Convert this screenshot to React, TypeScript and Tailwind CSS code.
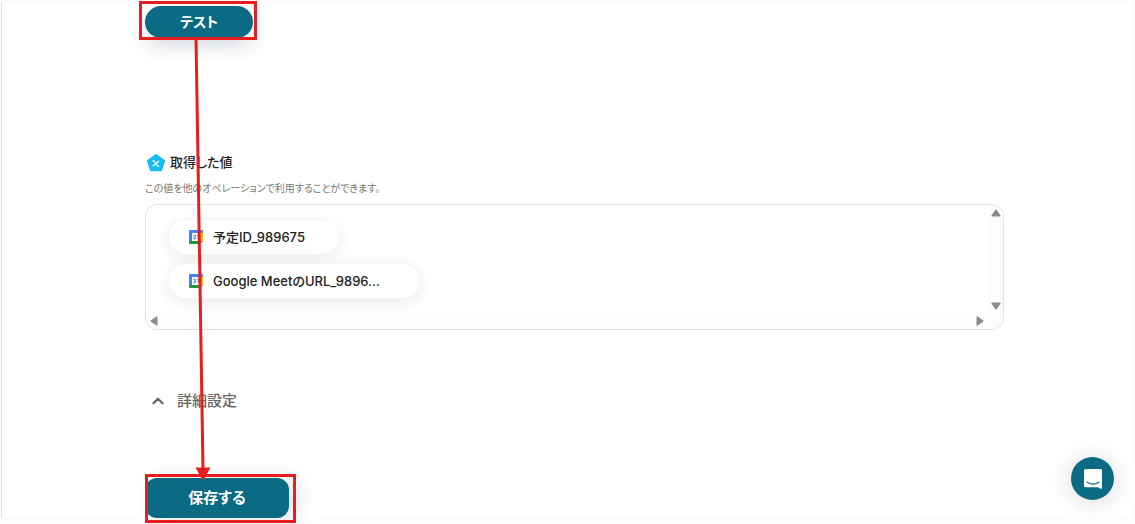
import React from 'react';
import { ChevronUp } from 'lucide-react';

const values = ['予定ID_989675', 'Google MeetのURL_9896...'];

const CalendarIcon: React.FC = () => (
  <svg viewBox="0 0 14 14" className="h-3.5 w-3.5 shrink-0" aria-hidden="true">
    <path d="M1 0h12a1 1 0 0 1 1 1v2H3v8H0V1a1 1 0 0 1 1-1z" fill="#4285f4" />
    <path d="M11 3h3v8h-3z" fill="#fbbc04" />
    <path d="M0 11h11v3H1a1 1 0 0 1-1-1z" fill="#1e9444" />
    <path d="M11 11h3l-3 3z" fill="#ea4335" />
    <path d="M3 3h8v8H3z" fill="#fff" />
    <path
      d="M4 5.2h2.3v3.6H4M4.6 7h1.7M7.8 5.4h1.4v3.8"
      fill="none"
      stroke="#4285f4"
      strokeWidth="0.9"
    />
  </svg>
);

const VariableIcon: React.FC = () => (
  <svg viewBox="0 0 20 20" className="h-5 w-5 shrink-0" aria-hidden="true">
    <path
      d="M11 3.2 18.8 8.900 16 18H6L3.200 8.900z"
      fill="#16bdef"
      stroke="#16bdef"
      strokeWidth="2.4"
      strokeLinejoin="round"
    />
    <path
      d="M7.600 8.900h1.300l3.700 5.200h1.600M14 8.900l-6.200 5.200"
      fill="none"
      stroke="#fff"
      strokeWidth="1.3"
    />
  </svg>
);

const ChatIcon: React.FC = () => (
  <svg viewBox="0 0 20 22" className="h-[22px] w-5" aria-hidden="true">
    <path d="M2.500 1h15a1.500 1.500 0 0 1 1.500 1.500V21l-4.500-1.800h-12A1.500 1.500 0 0 1 1 17.700V2.500A1.500 1.500 0 0 1 2.500 1z" fill="#fff" />
    <path
      d="M4.2 14.2c3.5 2.4 8.1 2.4 11.600 0"
      fill="none"
      stroke="#0b6a84"
      strokeWidth="1.2"
      strokeLinecap="round"
    />
  </svg>
);

const Arrow: React.FC<{ className?: string }> = ({ className = '' }) => (
  <svg viewBox="0 0 10 8" className={`h-2 w-2.5 ${className}`} aria-hidden="true">
    <path
      d="M5 1.2 9 6.8H1z"
      fill="#8b8b8b"
      stroke="#8b8b8b"
      strokeWidth="1.4"
      strokeLinejoin="round"
    />
  </svg>
);

const ValueList: React.FC = () => (
  <div className="mt-2 overflow-hidden rounded-xl border border-[#e2e2e2] bg-white">
    <div className="flex">
      <ul className="flex flex-1 flex-col items-start gap-2 py-3.5 pl-[22px]">
        {values.map((value) => (
          <li
            key={value}
            className="flex h-9 items-center gap-2.5 rounded-full border border-[#f4f4f4] bg-white pr-[34px] pl-5 shadow-[0_4px_16px_rgba(0,0,0,0.08)] last:pr-10"
          >
            <CalendarIcon />
            <span className="text-[13px] leading-5 font-medium text-[#222]">{value}</span>
          </li>
        ))}
      </ul>
      <div className="flex w-[15px] flex-col items-center justify-between bg-[#fcfcfc] pt-1 pb-[3px]">
        <Arrow />
        <Arrow className="rotate-180" />
      </div>
    </div>
    <div className="flex h-4 items-center justify-between bg-[#fcfcfc] pr-[18px] pl-[3px]">
      <Arrow className="-rotate-90" />
      <Arrow className="rotate-90" />
    </div>
  </div>
);

// Guide drawn over the form: highlights both buttons and the order to press them in
const Guide: React.FC = () => (
  <svg
    className="pointer-events-none absolute top-0 left-0 h-[524px] w-[320px]"
    viewBox="0 0 320 524"
    fill="none"
    stroke="#e81e1e"
    strokeWidth="3"
    aria-hidden="true"
  >
    <path d="M140.5 2.5h115v36h-115z" />
    <path d="M146.5 475.5h148v46h-148z" />
    <path d="M196 37 203 470" />
    <path d="M195.5 467.5h15L203 481z" fill="#e81e1e" stroke="none" />
  </svg>
);

const App: React.FC = () => {
  return (
    <div
      lang="ja"
      className="relative min-h-screen overflow-hidden bg-[#fcfcfc] pt-0.5 pr-[3px] pb-1.5 pl-px font-['Inter','Noto_Sans_CJK_JP',sans-serif] [font-feature-settings:'palt']"
    >
      <main className="border-l border-[#e2e2e2] bg-white pt-1 pr-32 pl-[143px]">
        <button
          type="button"
          className="block h-8 w-[108px] rounded-full bg-[#0b6a84] text-sm font-bold text-white shadow-[0_8px_20px_rgba(30,50,80,0.18)]"
        >
          テスト
        </button>

        <section className="pt-[114px]">
          <div className="flex items-center gap-[5px]">
            <VariableIcon />
            <h2 className="text-[13px] leading-5 font-medium text-[#222]">取得した値</h2>
          </div>
          <p className="mt-2 text-[10px] leading-4 text-[#777]">
            この値を他のオペレーションで利用することができます。
          </p>
          <ValueList />
        </section>

        <button
          type="button"
          className="mt-[59px] flex h-6 items-center gap-2.5 pl-1 text-[15px] font-medium text-[#666]"
        >
          <ChevronUp size={18} strokeWidth={3} />
          詳細設定
        </button>

        <button
          type="button"
          className="mt-[65px] block h-10 w-36 rounded-xl bg-[#0b6a84] text-[15px] font-bold text-white shadow-[8px_0_20px_rgba(30,50,80,0.14)]"
        >
          保存する
        </button>
      </main>

      <button
        type="button"
        aria-label="チャット"
        className="absolute right-[21px] bottom-6 flex h-[43px] w-[43px] items-center justify-center rounded-full bg-[#0b6a84] shadow-[0_2px_24px_rgba(0,0,0,0.16)]"
      >
        <ChatIcon />
      </button>

      <Guide />
    </div>
  );
};

export default App;
